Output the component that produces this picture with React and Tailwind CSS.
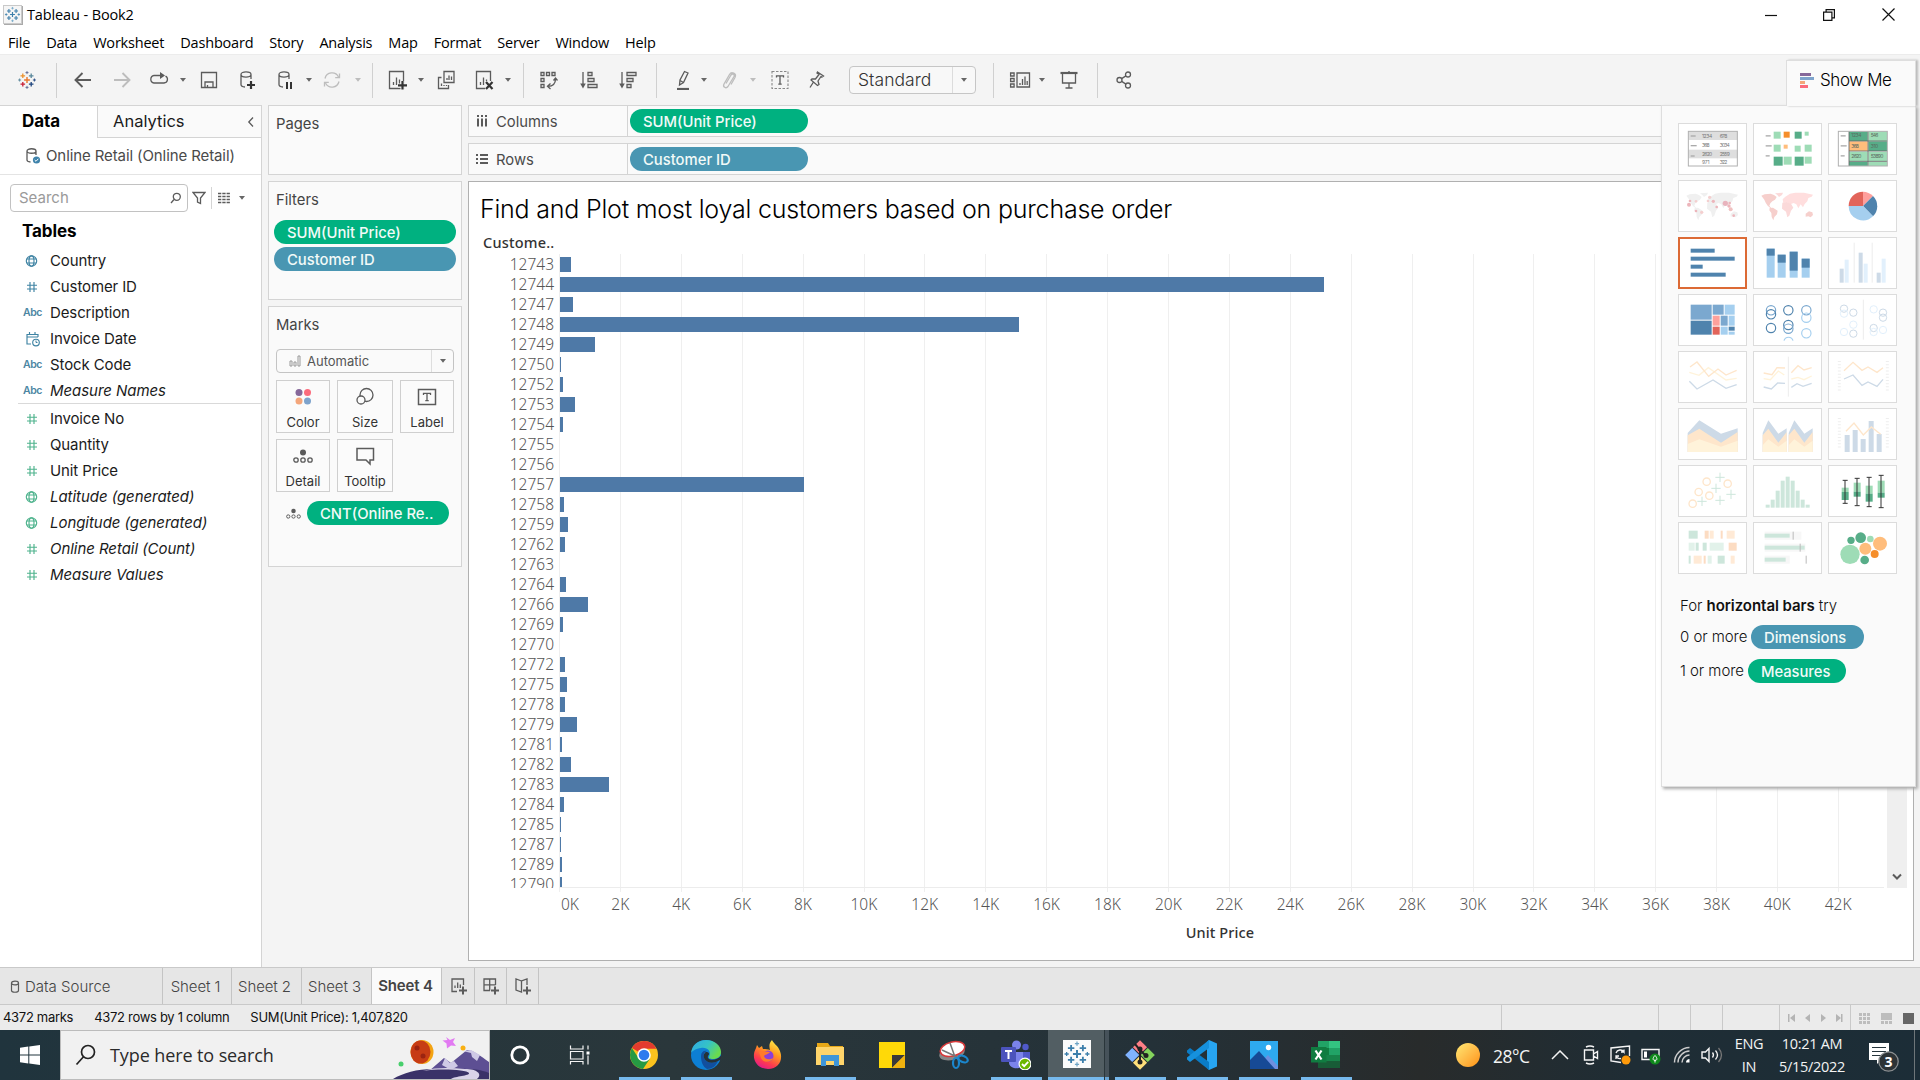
import React from "react";

const GRAY = "#5b5b5b";
const LIGHT = "#bdbdbd";

function Svg({ w = 20, h = 20, className = "", children, vb }) {
  return (
    <svg width={w} height={h} viewBox={vb || `0 0 ${w} ${h}`} fill="none" stroke={GRAY} strokeWidth="1.3" className={`block shrink-0 ${className}`}>
      {children}
    </svg>
  );
}

const Caret = ({ className = "", color = "#666" }) => (
  <Svg w={8} h={6} className={className}>
    <path d="M1 1h6L4 4.8z" fill={color} stroke="none" />
  </Svg>
);
const Sep = ({ className = "" }) => <div className={`h-[35px] w-px shrink-0 bg-[#d0d0d0] ${className}`} />;

function TableauMark({ w, className = "", mono, bg }) {
  const c = mono ? ["#3d7fab", "#3d7fab", "#3d7fab", "#3d7fab", "#3d7fab", "#6fa5c6"] : ["#e8762c", "#eb912c", "#c72037", "#1f457e", "#59879b", "#5c6692"];
  const plus = (x, y, r, col, sw = 1.3) => <path d={`M${x - r} ${y}h${2 * r}M${x} ${y - r}v${2 * r}`} stroke={col} strokeWidth={sw} />;
  return (
    <Svg w={w} h={w} vb="0 0 20 20" className={className}>
      {bg && <rect width="20" height="20" fill="#fbfbfb" stroke="none" />}
      {plus(10, 10, 2.9, c[0], 1.4)}
      {plus(5.8, 5.8, 2.3, c[1])}
      {plus(14.2, 5.8, 2.3, c[4])}
      {plus(5.8, 14.2, 2.3, c[2])}
      {plus(14.2, 14.2, 2.3, c[3])}
      {plus(10, 2.6, 1.5, c[5], 0.9)}
      {plus(10, 17.4, 1.5, c[5], 0.9)}
      {plus(2.6, 10, 1.5, c[4], 0.9)}
      {plus(17.4, 10, 1.5, c[3], 0.9)}
    </Svg>
  );
}

function TitleBar() {
  return (
    <div className="flex h-[29px] items-center bg-white pl-[3px] font-['Open_Sans',sans-serif]">
      <div className="border border-[#c9c9c9] bg-[#f5f5f5] shadow-[1px_1px_0_#aaa]">
        <TableauMark w={17} mono />
      </div>
      <span className="ml-[5px] text-[14.5px] tracking-[-0.12px] text-black">Tableau - Book2</span>
      <div className="ml-auto flex items-center pr-[25px]">
        <Svg w={12} h={12} className="mr-[46px]"><path d="M0 6.5h12" stroke="#111" strokeWidth="1.2" /></Svg>
        <Svg w={12} h={12} className="mr-[47px]"><path d="M.6 3.1h8.3v8.3H.6zM3.1 3V.6h8.3v8.3H9" stroke="#111" strokeWidth="1.2" /></Svg>
        <Svg w={13} h={13}><path d="M.5.5l12 12M12.5.5l-12 12" stroke="#111" strokeWidth="1.2" /></Svg>
      </div>
    </div>
  );
}

const MENU = ["File", "Data", "Worksheet", "Dashboard", "Story", "Analysis", "Map", "Format", "Server", "Window", "Help"];

function MenuBar() {
  return (
    <div className="flex h-[25px] items-center gap-4 bg-white pb-px pl-2 pt-[3px] font-['Open_Sans',sans-serif] text-[14.5px] tracking-[-0.2px] text-black">
      {MENU.map((m) => <span key={m}>{m}</span>)}
    </div>
  );
}

const barsBox = <path d="M2.5 1.5h14v17h-14zM6.5 15v-3M9.5 15V7.5M12.5 15V9.5" />;

function Toolbar() {
  return (
    <div className="flex h-[51px] items-center border-t border-[#ececec] bg-[#f4f4f4]">
      <TableauMark w={20} className="ml-[17px]" />
      <Sep className="ml-[19px]" />
      <Svg className="ml-4"><path d="M18 10H3M9.5 3L2.5 10l7 7" strokeWidth="1.9" /></Svg>
      <Svg className="ml-[19px]"><path d="M2 10h15M10.5 3l7 7-7 7" stroke={LIGHT} strokeWidth="1.9" /></Svg>
      <Svg className="ml-[17px]"><path d="M11 5.5H5A3.8 3.8 0 0 0 5 13h10A3.6 3.6 0 0 0 16.5 6.2" /><path d="M11 2v7l5-3.500z" fill={GRAY} stroke="none" /></Svg>
      <Caret className="ml-[10px]" />
      <Svg className="ml-[12px]"><path d="M2.5 2.5h15v15h-15zM6 17.5v-5.500h8v5.500M8.5 17.5v-2.500" /></Svg>
      <Svg className="ml-[18px]"><path d="M4 4.5c0-3.500 10-3.500 10 0s-10 3.500-10 0v10c0 1.500 1.500 2.300 4 2.500M14 4.500V9" /><path d="M14 11v8M10 15h8" stroke="#333" strokeWidth="2.2" /></Svg>
      <Svg className="ml-[18px]"><path d="M4 4.5c0-3.500 10-3.500 10 0s-10 3.500-10 0v10c0 1.500 1.500 2.300 4 2.500M14 4.500V9" /><path d="M12 12v7M16 12v7" stroke="#333" strokeWidth="2" /></Svg>
      <Caret className="ml-[10px]" />
      <Svg className="ml-[9px]"><g stroke={LIGHT}><path d="M3 8.500a7.200 7.200 0 0 1 13.500-1.500M17 11.500A7.200 7.200 0 0 1 3.500 13" /><path d="M17.500 3.500v4.200h-4.300M2.500 16.500v-4.200h4.300" /></g></Svg>
      <Caret className="ml-[12px]" color={LIGHT} />
      <Sep className="ml-[10px]" />
      <Svg className="ml-[14px]">{barsBox}<path d="M15.500 11v9M11 15.500h9" stroke="#f4f4f4" strokeWidth="4" /><path d="M15.500 11v8.500M11 15.300h9" stroke="#333" strokeWidth="2.200" /></Svg>
      <Caret className="ml-[10px]" />
      <Svg className="ml-[11px]"><path d="M8 1.500h10v11H8zM11 10V8M13 10V5.500M15.500 10V6.500M5.500 7.500H2.500v11h10v-3.500M5.500 16v-2.500M8 16v-1M10.500 16v-1" /></Svg>
      <Svg className="ml-[18px]">{barsBox}<path d="M11 11h9v9h-9z" fill="#f4f4f4" stroke="none" /><path d="M12 12l6.500 7M18.500 12L12 19" stroke="#333" strokeWidth="2.200" /></Svg>
      <Caret className="ml-[10px]" />
      <Sep className="ml-[11px]" />
      <Svg className="ml-[14px]"><path d="M3 2.500h3v3H3zM8.500 2.500h3v3h-3zM14 2.500h3v3h-3zM3 8.500h3v3H3zM3 14.500h3v3H3zM17.500 9c0 4.500-3 7.200-7.500 7.300M15.500 10.500l2-2.500 2 2.500M12.500 13.500l-3 2.800 3 2.700" /></Svg>
      <Svg className="ml-[21px]"><path d="M4 2v14M9 2.500h4v3H9zM9 8.500h6v3H9zM9 14.500h9v3H9z" /><path d="M1.200 13.500h5.600L4 18.500z" fill={GRAY} stroke="none" /></Svg>
      <Svg className="ml-[19px]"><path d="M4 2v14M9 2.500h9v3H9zM9 8.500h6v3H9zM9 14.500h4v3H9z" /><path d="M1.200 13.500h5.600L4 18.500z" fill={GRAY} stroke="none" /></Svg>
      <Sep className="ml-[18px]" />
      <Svg className="ml-4"><path d="M11.500 1.500l3.500 1.500-4.500 9.500-4 2.500.5-5zM7 10.500l3.500 2" /><path d="M4 19h12" strokeWidth="2.200" /></Svg>
      <Caret className="ml-[7px]" />
      <Svg className="ml-[11px]"><path d="M7 13.500l5-8.500c1.500-2 4-.5 3 1.500l-6 10c-2 2.500-5.500.5-4-2.500l5.500-9.500c2-3.500 7.500-1 5.500 3l-4 7" stroke={LIGHT} /></Svg>
      <Caret className="ml-[10px]" color={LIGHT} />
      <Svg className="ml-[13px]"><path d="M2 1.500h16v17H2z" strokeDasharray="2.500 1.500" strokeWidth="1.100" stroke="#888" /><path d="M6.500 7.500V5.800h7v1.700M10 5.800v8.400M8.300 14.200h3.400" /></Svg>
      <Svg className="ml-[17px]"><path d="M10.500 2l6 4-1.500 1-1-.5-3 4.500 1 3.500-1.500 1L4 10l1-1.200 3.500.2L12 4.500 10 3zM6.500 12L3 17.500" /></Svg>
      <div className="ml-[22px] flex h-[28px] w-[127px] items-center rounded-sm border border-[#c6c6c6] bg-[#f8f8f8] pl-2">
        <span className="grow text-[17.5px] font-light tracking-[0.05px] text-[#333]">Standard</span>
        <div className="flex h-full w-[23px] items-center justify-center border-l border-[#dcdcdc]"><Caret /></div>
      </div>
      <Sep className="ml-[17px]" />
      <Svg w={22} className="ml-[15px]"><path d="M1.600 3h3.500v3H1.600zM1.600 8.500h3.500v3H1.600zM1.600 14h3.500v3H1.600zM8 3h12.500v14H8zM11 15v-2M13.500 15V9M16 15V6.500M18.200 15v-4" /></Svg>
      <Caret className="ml-[7px]" />
      <Svg className="ml-[13px]"><path d="M1.500 3h17" strokeWidth="2.200" /><path d="M3.500 4v9h13V4M10 1v2M10 13v5M6.500 18h7" /></Svg>
      <Sep className="ml-[18px]" />
      <Svg className="ml-4"><circle cx="5.500" cy="10" r="2.500" /><circle cx="14" cy="4.500" r="2.500" /><circle cx="14" cy="15.500" r="2.500" /><path d="M7.700 8.600l4.200-2.700M7.700 11.400l4.200 2.700" /></Svg>
    </div>
  );
}

function FieldIcon({ type, color }) {
  if (type === "abc") return <span className="-ml-px w-[16px] text-center text-[10.5px] font-semibold leading-none tracking-[-0.5px] text-[#4c86a3]">Abc</span>;
  return (
    <Svg w={16} h={16}>
      <g stroke={color} strokeWidth="1.15">
        {type === "globe" && <><circle cx="7.5" cy="8" r="5.200" /><ellipse cx="7.5" cy="8" rx="2.500" ry="5.200" /><path d="M3 6h9M3 10h9" /></>}
        {type === "num" && <path d="M6 3v10M10 3v10M3 6.200h10M3 10h10" />}
        {type === "date" && <><path d="M14 6V3.500H3v9.500h4M3 6h11M5.500 1v3M11 1v3" /><circle cx="12" cy="11.500" r="3.300" /><path d="M12 9.500v2h1.500" strokeWidth="1" /></>}
      </g>
    </Svg>
  );
}

const DIMS = [["globe", "Country"], ["num", "Customer ID"], ["abc", "Description"], ["date", "Invoice Date"], ["abc", "Stock Code"], ["abc", "Measure Names", 1]];
const MEAS = [["num", "Invoice No"], ["num", "Quantity"], ["num", "Unit Price"], ["globe", "Latitude (generated)", 1], ["globe", "Longitude (generated)", 1], ["num", "Online Retail (Count)", 1], ["num", "Measure Values", 1]];

function Field({ f, color }) {
  return (
    <div className="flex h-[26px] items-center">
      <div className="flex w-[26px] items-center justify-start"><FieldIcon type={f[0]} color={color} /></div>
      <span className={f[2] ? "text-[15px] italic tracking-[-0.05px]" : "text-[15px] tracking-[-0.12px]"}>{f[1]}</span>
    </div>
  );
}

function DataPane() {
  return (
    <div className="flex h-[862px] w-[262px] shrink-0 flex-col border-r border-t border-[#d4d4d4] bg-white text-[#1b1b1b]">
      <div className="flex h-8">
        <div className="w-[97px] pl-[22px] pt-[3px] text-[17px] font-bold tracking-[-0.1px] text-black">Data</div>
        <div className="flex grow items-center border-b border-l border-[#d4d4d4] bg-[#fafafa] pl-[15px]">
          <span className="text-[16.5px]">Analytics</span>
          <Svg w={8} h={12} className="ml-auto mr-1.5"><path d="M6 1.500L1.800 6 6 10.500" /></Svg>
        </div>
      </div>
      <div className="flex h-[37px] items-center border-b border-[#e4e4e4] pl-[25px]">
        <Svg w={17} h={18}><path d="M2 4c0-3 9-3 9 0s-9 3-9 0v9c0 1 1 1.800 3.500 2M11 4v4" /><circle cx="11.500" cy="13" r="3.600" fill="#3f83ab" stroke="none" /><path d="M9.700 13l1.300 1.300 2.300-2.500" stroke="#fff" strokeWidth="1" /></Svg>
        <span className="ml-[4px] text-[15px] tracking-[-0.1px] text-[#4a4a4a]">Online Retail (Online Retail)</span>
      </div>
      <div className="mt-[9px] flex h-[28px] items-center pl-[10px]">
        <div className="flex h-[28px] w-[178px] items-center rounded-sm border border-[#c2c2c2] pl-[8px]">
          <span className="grow text-[15px] text-[#9a9a9a]">Search</span>
          <Svg w={12} h={12} className="mr-[5px]"><circle cx="6.800" cy="4.800" r="3.500" /><path d="M4 7.500L1 11" /></Svg>
        </div>
        <Svg w={14} h={14} className="ml-[4px]"><path d="M1 1.500h12L8.500 7v5.500l-3-1.500V7z" /></Svg>
        <div className="ml-[5px] h-[22px] w-px bg-[#d4d4d4]" />
        <Svg w={14} h={12} className="ml-[5px]"><path d="M1 1.500h12M1 4.500h12M1 7.500h12M1 10.500h12" strokeDasharray="3.300 1" strokeWidth="1.500" /></Svg>
        <Caret className="ml-[7px]" />
      </div>
      <div className="flex h-[36px] items-center pl-[22px] pt-[3px] text-[17px] font-bold tracking-[-0.1px] text-black">Tables</div>
      <div className="pl-[24px]">
        {DIMS.map((f) => <Field key={f[1]} f={f} color="#3f83a3" />)}
      </div>
      <div className="-mt-px ml-[18px] h-px shrink-0 bg-[#d9d9d9]" />
      <div className="pl-[24px] pt-[2px]">
        {MEAS.map((f) => <Field key={f[1]} f={f} color="#4fb38d" />)}
      </div>
    </div>
  );
}

const Pill = ({ blue, className = "", children }) => (
  <div className={`flex h-6 items-center rounded-full pl-[13px] pt-[2px] text-[14.8px] font-medium text-[#f2faf8] ${blue ? "bg-[#4996b2]" : "bg-[#00b180]"} ${className}`}>{children}</div>
);

const Detail = ({ w = 20 }) => (
  <Svg w={w} h={w} vb="0 0 20 20"><circle cx="10" cy="6.500" r="3" fill={GRAY} stroke="none" /><circle cx="3" cy="14" r="2.200" /><circle cx="10" cy="14" r="2.200" /><circle cx="17" cy="14" r="2.200" /></Svg>
);

function MarkButton({ label, className, children }) {
  return (
    <div className={`flex h-[53px] flex-col items-center border border-[#cfcfcf] bg-[#fbfbfb] pt-[6px] ${className}`}>
      {children}
      <span className="mt-[5px] text-[13px] leading-5 text-[#333]">{label}</span>
    </div>
  );
}

function Cards() {
  const card = "border border-[#d4d4d4] bg-[#fafafa]";
  const head = "pl-[7px] text-[14.8px] text-[#444]";
  return (
    <div className="ml-1.5 flex w-[194px] shrink-0 flex-col">
      <div className={`h-[70px] ${card}`}><div className={`pt-[7px] ${head}`}>Pages</div></div>
      <div className={`mt-[6px] h-[119px] ${card}`}>
        <div className={`h-[38px] pt-[7px] ${head}`}>Filters</div>
        <div className="flex flex-col gap-[3px] px-[5px]">
          <Pill className="w-[182px]">SUM(Unit Price)</Pill>
          <Pill blue className="w-[182px]">Customer ID</Pill>
        </div>
      </div>
      <div className={`mt-[6px] h-[261px] ${card}`}>
        <div className={`h-[42px] pt-[7px] ${head}`}>Marks</div>
        <div className="mx-[7px] flex h-[24px] items-center rounded-sm border border-[#c4c4c4]">
          <Svg w={12} h={12} className="ml-3 opacity-60"><path d="M1 6h2v5H1zM5 7h2v4H5zM9 1h2v10H9z" strokeWidth="1" /></Svg>
          <span className="ml-[6px] grow pt-px text-[13px] text-[#555]">Automatic</span>
          <div className="flex h-full w-[22px] items-center justify-center border-l border-[#dedede]"><Caret /></div>
        </div>
        <div className="mx-[7px] mt-[7px] flex gap-x-[7px]">
          <MarkButton label="Color" className="w-[54px]">
            <Svg w={20} h={20}><g stroke="none"><circle cx="6" cy="5.500" r="3.500" fill="#86689a" /><circle cx="14.500" cy="5.500" r="3.500" fill="#fb6b7c" /><circle cx="6" cy="14" r="3.500" fill="#f4a67b" /><circle cx="14.500" cy="14" r="3.500" fill="#7ea3cc" /></g></Svg>
          </MarkButton>
          <MarkButton label="Size" className="w-[56px]">
            <Svg><circle cx="11.500" cy="8" r="6.500" /><circle cx="6" cy="13" r="4" fill="#fbfbfb" /></Svg>
          </MarkButton>
          <MarkButton label="Label" className="w-[54px]">
            <Svg><path d="M1.500 2.500h17v15h-17z" strokeWidth="1.500" /><path d="M6.500 8V6.300h7V8M10 6.300v7.400M8.300 13.700h3.400" /></Svg>
          </MarkButton>
        </div>
        <div className="mx-[7px] mt-[6px] flex gap-x-[7px]">
          <MarkButton label="Detail" className="w-[54px]"><Detail /></MarkButton>
          <MarkButton label="Tooltip" className="w-[56px]">
            <Svg><path d="M2 2.500h16.500v11.500h-3.500v4l-4-4H2z" strokeWidth="1.500" /></Svg>
          </MarkButton>
        </div>
        <div className="ml-[17px] mt-[9px] flex items-center">
          <Detail w={15} />
          <Pill className="ml-[6px] w-[142px]">CNT(Online Re..</Pill>
        </div>
      </div>
    </div>
  );
}

function Shelf({ label, icon, children }) {
  return (
    <div className="flex h-8 items-center border border-[#d4d4d4] bg-[#fafafa]">
      <div className="flex h-full w-[159px] items-center border-r border-[#d4d4d4] pl-[7px]">
        {icon}
        <span className="ml-[8px] pt-[2px] text-[14.8px] text-[#4a4a4a]">{label}</span>
      </div>
      {children}
    </div>
  );
}

const ROWS = [
  [12743, 11], [12744, 764], [12747, 13], [12748, 459], [12749, 35], [12750, 1], [12752, 3], [12753, 15], [12754, 3], [12755, 0], [12756, 0],
  [12757, 244], [12758, 4], [12759, 8], [12762, 5], [12763, 0], [12764, 6], [12766, 28], [12769, 3], [12770, 0], [12772, 5], [12775, 7],
  [12778, 5], [12779, 17], [12781, 2], [12782, 11], [12783, 49], [12784, 4], [12785, 1], [12787, 1], [12789, 2], [12790, 2],
];
const TICKS = Array.from({ length: 22 }, (_, i) => i * 2);

function View() {
  return (
    <div className="mt-[6px] flex h-[780px] flex-col border border-[#b0b0b0] bg-white">
      <div className="h-[51px] pl-[11px] pt-[7px] text-[25px] font-light leading-10 tracking-[-0.21px] text-black">Find and Plot most loyal customers based on purchase order</div>
      <div className="h-[21px] pl-[14px] font-['Noto_Sans',sans-serif] text-[14.5px] font-medium leading-[19px] tracking-[0.2px] text-[#333]">Custome..</div>
      <div className="flex h-[634px] font-['Noto_Sans',sans-serif]">
        <div className="h-[634px] w-[86px] overflow-hidden pr-px text-right text-[15.5px] font-light text-[#555]">
          {ROWS.map((r) => <div key={r[0]} className="h-5 leading-[21px]">{r[0]}</div>)}
        </div>
        <div className="ml-[4px] grid w-[1325px] grid-cols-1 grid-rows-1">
          <svg width="1325" height="638" viewBox="0 0 1325 638" className="col-start-1 row-start-1 block overflow-visible">
            {TICKS.map((t, i) => <rect key={t} x={Math.round(i * 60.9)} y="0" width="1" height="638" fill="#efefef" />)}
            <rect x="0" y="633" width="1325" height="1" fill="#ececec" />
            {ROWS.map((r, i) => <rect key={r[0]} x="1" y={3 + i * 20} width={r[1]} height={i === 31 ? 10 : 15} fill="#4e79a7" />)}
          </svg>
        </div>
        <div className="ml-[3px] flex w-5 flex-col items-center justify-end bg-[#efefef] pb-[7px]">
          <Svg w={10} h={8}><path d="M1 1.500L5 5.500 9 1.500" strokeWidth="2" /></Svg>
        </div>
      </div>
      <div className="flex h-[34px] pl-[60px] font-['Noto_Sans',sans-serif] text-[15.5px] font-light leading-[33px] text-[#555]">
        {TICKS.map((t, i) => <div key={t} className={i === 0 ? "w-[60.9px] shrink-0 pl-[21px] text-center" : "w-[60.9px] shrink-0 text-center"}>{t}K</div>)}
      </div>
      <div className="pl-[66px] text-center font-['Noto_Sans',sans-serif] text-[14.5px] font-medium leading-5 tracking-[0.1px] text-[#333]"><span className="pr-2">Unit Price</span></div>
    </div>
  );
}

/* Thumbnails of the chart types, drawn on a 207 x 156 grid. */
const LAND = {
  am: "M25 47l10-4 18-2 10 4 8 6-5 8-8 5-6 6-3 7 5 6 6 4-8-3-8-7-6-9-4-9zM50 84l10-1 14 9-2 11-8 8-3 10-5-10-1-12-6-8z",
  gl: "M66 40l24-2-3 7-9 6-5-6z",
  eu: "M89 58l8-8 14-9 16-3 26 0 27 6-4 6-10 4-3 10-8 8-5 10-7-9-7 12-6-12-8-4-10 4-9-6-12 2z",
  af: "M88 68l14-2 12 5 7 12-7 9-5 15-6 5-4-17-12-9z",
  au: "M158 101l10-7 10 3 2 8-7 7-7-3-8 1z",
};

const line = (pts, c, w = 4) => <polyline points={pts} stroke={c} strokeWidth={w} />;
const rects = (arr) => arr.map(([x, y, w, h, f], i) => <rect key={i} x={x} y={y} width={w} height={h} fill={f} stroke="none" />);
const dots = (arr) => arr.map(([x, y, r, f], i) => <circle key={i} cx={x} cy={y} r={r} fill={f} stroke="none" />);
const rings = (arr, r, sw) => arr.map(([x, y, c], i) => <circle key={i} cx={x} cy={y} r={r} stroke={c} strokeWidth={sw} />);
const cells = (arr, fill = "#777") => arr.map(([x, y, t], i) => <text key={i} x={x} y={y} fontSize="15" fill={fill} stroke="none" textLength={t.length * 7.6}>{t}</text>);
const G1 = "#9edcb6", G2 = "#57ad88", O1 = "#ffbd7c", O2 = "#f58e2b", B0 = "#4f83ad", B1 = "#7ba8cf", B2 = "#a5cfef";
const PB = "#cddae7", PL = "#e2f0fc", PO = "#fee6cb", PY = "#fff3da", PG = "#cde6db";

const THUMBS = [
  <>{rects([[31, 25, 147, 26, "#dedede"], [31, 80, 147, 26, "#dedede"], [38, 37, 15, 4, "#aaa"], [38, 66, 18, 4, "#aaa"], [38, 97, 12, 4, "#aaa"]])}<rect x="31" y="25" width="147" height="104" stroke="#b0b0b0" strokeWidth="3" />{cells([[72, 45, "1234"], [125, 45, "678"], [72, 72, "368"], [125, 72, "3034"], [72, 99, "2620"], [125, 99, "2559"], [72, 123, "971"], [125, 123, "322"]])}</>,
  <>{rects([[38, 36, 15, 5, "#bbb"], [38, 66, 18, 5, "#bbb"], [38, 96, 12, 5, "#bbb"], [62, 26, 21, 21, G1], [92, 26, 18, 18, O2], [125, 26, 21, 21, G2], [155, 26, 12, 12, G1], [62, 65, 21, 21, G1], [92, 65, 12, 12, O1], [125, 68, 18, 18, G1], [155, 65, 21, 21, G1], [62, 101, 27, 27, G2], [92, 101, 24, 24, G1], [125, 101, 27, 27, G2], [155, 101, 21, 21, G1]])}</>,
  <>{rects([[63, 25, 56, 29, G2], [121, 25, 56, 29, G1], [63, 55, 56, 29, O1], [121, 55, 56, 29, G2], [63, 86, 56, 28, G1], [121, 86, 56, 28, G1], [63, 116, 56, 13, G2], [121, 116, 56, 13, G1], [38, 36, 15, 5, "#bbb"], [38, 66, 18, 5, "#bbb"], [38, 96, 12, 5, "#bbb"]])}<path d="M63 25v104M120 25v104M63 54h115M63 84h115M63 115h115" stroke="#666" strokeWidth="2.5" /><rect x="31" y="25" width="147" height="104" stroke="#b0b0b0" strokeWidth="3" />{cells([[70, 43, "1234"], [128, 43, "546"], [70, 75, "368"], [128, 75, "310"], [70, 105, "2620"], [128, 105, "53890"]], "#5a6a60")}</>,
  <><g stroke="none" fill="#f0f0f0">{Object.values(LAND).map((d) => <path key={d} d={d} />)}</g>{dots([[33, 74, 6, "#edb5bb"], [36, 63, 4, "#edb5bb"], [54, 64, 4, "#f4cfcf"], [95, 52, 5, "#f4cfcf"], [106, 64, 5, "#edb5bb"], [90, 63, 4, "#f4cfcf"], [116, 81, 4, "#edb5bb"], [142, 70, 8, "#e8b3bd"], [155, 69, 4, "#edb5bb"], [153, 78, 5, "#edb5bb"], [158, 88, 6, "#f0c0c0"], [54, 93, 4, "#edb5bb"], [71, 97, 5, "#f4cfcf"], [167, 107, 4, "#edb5bb"]])}</>,
  <g stroke="none"><path d={LAND.am} fill="#f6cfcc" /><path d={LAND.gl} fill="#fbd9d9" /><path d={LAND.eu} fill="#ffdede" /><path d={LAND.af} fill="#fbd9d9" /><path d={LAND.au} fill="#f6cfcc" /></g>,
  <g stroke="none"><path d="M105 78V35a43 43 0 0 1 30 13z" fill="#ff9f9c" /><path d="M105 78l30-30a43 43 0 0 1 0 61z" fill={B0} /><path d="M105 78l30 31a43 43 0 0 1-73-31z" fill={B2} /><path d="M105 78H62a43 43 0 0 1 43-43z" fill="#e2645a" /></g>,
  rects([[38, 35, 72, 12, B0], [38, 59, 132, 12, B0], [38, 83, 36, 12, B0], [38, 107, 105, 12, B0]]),
  rects([[41, 35, 24, 87, B2], [74, 53, 24, 69, B2], [110, 44, 24, 78, B2], [146, 65, 24, 57, B2], [41, 35, 24, 21, B0], [74, 53, 24, 24, B0], [110, 44, 24, 57, B0], [146, 65, 24, 27, B0]]),
  rects([[35, 95, 12, 42, PB], [50, 68, 12, 69, PL], [77, 17, 3, 120, "#ececec"], [92, 47, 12, 90, PB], [107, 80, 12, 57, PL], [131, 17, 3, 120, "#ececec"], [146, 107, 12, 30, PB], [161, 65, 12, 72, PL]]),
  rects([[38, 32, 63, 45, B1], [38, 80, 63, 42, B0], [104, 32, 33, 30, B1], [140, 32, 30, 30, B2], [104, 65, 21, 30, "#ffa19c"], [128, 65, 21, 30, B1], [152, 65, 18, 30, B2], [104, 98, 21, 24, "#e2645a"], [128, 98, 21, 24, B2], [152, 98, 18, 12, B0], [152, 113, 18, 9, B2]]),
  <>{rings([[54, 49, B1], [54, 61, B0], [54, 102, B0], [106, 49, B0], [106, 93, B0], [106, 104, B1], [160, 49, B1], [160, 71, B2], [160, 118, B2]], 14, 3.5)}<path d="M93 140a14 14 0 0 1 27 0" stroke={B2} strokeWidth="3.5" /></>,
  <>{rings([[48, 44, PB], [48, 59, PL], [76, 56, PB], [76, 92, PL], [48, 114, PL], [76, 119, PB], [137, 46, PL], [165, 56, PB], [165, 71, PB], [137, 102, PB], [137, 114, PL], [165, 108, PL]], 11, 3)}<path d="M106 17v120" stroke="#ececec" strokeWidth="3" /></>,
  <>{line("34,64 63,73 91,50 144,87 176,82", PY)}{line("36,48 57,33 92,76 120,54 144,72 176,58", PO)}{line("34,91 57,114 105,87 144,112 176,101", PB)}</>,
  <>{line("32,66 57,71 72,50 96,51", PO)}{line("32,83 52,86 76,60 94,72", PY)}{line("32,108 55,114 74,96 96,97", PB)}{line("115,65 135,44 153,57 176,50", PO)}{line("115,84 135,79 153,86 176,75", PY)}{line("115,109 132,98 150,106 176,97", PB)}<path d="M106 17v120" stroke="#ececec" strokeWidth="3" /></>,
  <>{line("48,59 75,34 102,58 120,48 147,64 165,50", PO)}{line("48,84 75,72 102,103 120,93 147,106 165,85", PB)}<path d="M34 30v94M178 30v94" stroke="#eee" strokeWidth="9" strokeDasharray="3 6.5" /></>,
  <g stroke="none"><path d="M29 75l35-38 65 40 50-16v71H29z" fill={PB} /><path d="M29 82l35-20 65 42 50-32v60H29z" fill={PO} /><path d="M29 108l35-14 65 22 50-18v34H29z" fill={PY} /></g>,
  <g stroke="none"><path d="M29 75l17-38 30 40 25-16v71H29zM107 75l17-38 30 40 25-16v71h-72z" fill={PB} /><path d="M29 82l17-20 30 42 25-32v60H29zM107 82l17-20 30 42 25-32v60h-72z" fill={PO} /><path d="M29 112l17-18 30 22 25-18v34H29zM107 112l17-18 30 22 25-18v34h-72z" fill={PY} /></g>,
  <>{rects([[50, 81, 15, 51, PB], [74, 66, 15, 66, PB], [98, 93, 15, 39, PB], [122, 39, 15, 93, PB], [146, 78, 15, 54, PB]])}{line("54,70 78,45 106,81 130,57 158,79", PO)}<path d="M34 30v94M178 30v94" stroke="#eee" strokeWidth="9" strokeDasharray="3 6.5" /></>,
  <>{rings([[44, 116, PO], [62, 81, PO], [86, 50, PO], [94, 92, PO], [149, 56, PO]], 11, 4)}<path d="M58 109h28M72 95v28M100 70h28M114 56v28M112 37h28M126 23v28M112 106h28M126 92v28M145 88h28M159 74v28" stroke={PG} strokeWidth="3" /></>,
  rects([[38, 119, 12, 9, PG], [53, 104, 12, 24, PG], [68, 77, 12, 51, PG], [83, 47, 12, 81, PG], [98, 35, 12, 93, PG], [113, 47, 12, 81, PG], [128, 77, 12, 51, PG], [143, 104, 12, 24, PG], [158, 119, 12, 9, PG]]),
  <>{rects([[41, 68, 21, 13, G1], [41, 81, 21, 24, G2], [77, 53, 21, 27, G1], [77, 80, 21, 15, G2], [113, 62, 21, 24, G1], [113, 86, 21, 24, G2], [149, 47, 21, 36, G1], [149, 83, 21, 15, G2]])}<path d="M51 46v69M44 46h15M44 115h15M87 40v82M80 40h15M80 122h15M123 37v88M116 37h15M116 125h15M159 31v97M152 31h15M152 128h15" stroke="#333" strokeWidth="3" /></>,
  rects([[32, 26, 27, 24, PG], [80, 26, 12, 24, "#fcdcc2"], [95, 26, 12, 24, "#ffead6"], [128, 26, 6, 24, "#fcdcc2"], [146, 26, 24, 24, "#ffead6"], [32, 62, 18, 24, "#e2f2ea"], [53, 62, 9, 24, PG], [74, 62, 12, 24, PG], [95, 62, 42, 24, "#e2f2ea"], [152, 62, 24, 24, "#fcdcc2"], [32, 101, 6, 24, PG], [47, 101, 24, 24, "#ffead6"], [77, 101, 6, 24, "#fcdcc2"], [89, 101, 12, 24, "#e2f2ea"], [119, 101, 21, 24, PG], [158, 101, 12, 24, "#ffead6"]]),
  rects([[35, 29, 110, 24, "#f7f7f7"], [35, 65, 122, 24, "#f7f7f7"], [35, 101, 75, 24, "#f7f7f7"], [35, 35, 75, 12, PG], [35, 71, 120, 12, PG], [35, 107, 63, 12, PG], [119, 29, 3, 24, "#bbb"], [140, 65, 3, 24, "#bbb"], [158, 101, 3, 24, "#bbb"]]),
  dots([[66, 97, 29, G1], [69, 55, 11, G2], [98, 47, 16, G2], [127, 51, 10, G1], [112, 80, 18, O1], [156, 65, 21, O1], [140, 96, 12, O2], [110, 114, 13, G2]]),
];

function ShowMe() {
  return (
    <div className="absolute left-[1661px] top-[60px] flex w-[255px] flex-col">
      <div className="z-10 ml-[125px] flex h-[46px] w-[130px] items-center border border-b-0 border-[#dedede] bg-[#fafafa] pb-[6px] pl-[12px] shadow-[2px_0_2px_#bbb]">
        <Svg w={16} h={16}>{rects([[1, 0, 11, 3, "#86689a"], [1, 4, 14, 3, "#7ea3cc"], [1, 8, 5, 3, "#f4a67b"], [1, 12, 8, 3, "#fb6b7c"]])}</Svg>
        <span className="ml-[5px] pt-px text-[17px] font-light tracking-[-0.4px] text-black">Show Me</span>
      </div>
      <div className="-mt-px h-[682px] border border-[#dedede] bg-[#fafafa] px-4 pt-[17px] shadow-[2px_2px_3px_#aaa]">
        <div className="grid grid-cols-[69px_69px_69px] gap-x-[6px] gap-y-[5px]">
          {THUMBS.map((t, i) => (
            <div key={i} className={`h-[52px] w-[69px] bg-white outline ${i === 6 ? "outline-2 outline-[#dc6a35] -outline-offset-2" : "outline-1 -outline-offset-1 outline-[#dcdcdc]"}`}>
              <Svg w={69} h={52} vb="0 0 207 156">{t}</Svg>
            </div>
          ))}
        </div>
        <div className="ml-[2px] mt-[20px] text-[15px] leading-6 tracking-[-0.05px] text-[#111]"><span className="font-light">For </span><b className="font-semibold">horizontal bars</b><span className="font-light"> try</span></div>
        <div className="ml-[2px] mt-[7px] flex items-center text-[15px] tracking-[-0.05px] text-[#111]"><span className="w-[71px] font-light">0 or more</span><Pill blue className="w-[113px]">Dimensions</Pill></div>
        <div className="ml-[2px] mt-[10px] flex items-center text-[15px] tracking-[-0.05px] text-[#111]"><span className="w-[68px] font-light">1 or more</span><Pill className="w-[98px]">Measures</Pill></div>
      </div>
    </div>
  );
}

function SheetTabs() {
  const tab = "flex h-full items-center border-r border-[#c4c4c4]";
  return (
    <div className="flex h-[37px] items-center border-t border-[#c9c9c9] bg-[#e6e6e6] text-[15px] font-light text-[#444]">
      <div className={`${tab} w-[163px] pl-[10px] pt-[2px]`}>
        <Svg w={10} h={14} className="mr-[5px]"><path d="M1.5 3c0-2.500 7-2.500 7 0s-7 2.500-7 0v7.500c0 2.300 7 2.300 7 0V3" strokeWidth="1.2" /></Svg>
        Data Source
      </div>
      <div className={`${tab} w-[69px] justify-center pr-[3px] pt-[2px] tracking-[-0.1px]`}>Sheet 1</div>
      <div className={`${tab} w-[70px] justify-center pr-[4px] pt-[2px] tracking-[-0.1px]`}>Sheet 2</div>
      <div className={`${tab} w-[70px] justify-center pr-[4px] pt-[2px] tracking-[-0.1px]`}>Sheet 3</div>
      <div className={`${tab} w-[70px] justify-center bg-[#fafafa] pr-[2px] text-[15px] font-semibold tracking-[-0.15px]`}>Sheet 4</div>
      <div className={`${tab} w-[33px] justify-center pl-[2px]`}><Svg w={18} h={18}><path d="M7 14.500H2V2h11.500v6M5 11V8.500M7.700 11V5.500M10.300 11V7.500" /><path d="M13 9.500v8M9 13.500h8" strokeWidth="2" /></Svg></div>
      <div className={`${tab} w-[32px] justify-center`}><Svg w={18} h={18}><path d="M8 13.500H2V2h11.500v6M2 7.800h11.500M7.700 2v11.500" /><path d="M13 9.500v8M9 13.500h8" strokeWidth="2" /></Svg></div>
      <div className={`${tab} w-[32px] justify-center`}><Svg w={18} h={18}><path d="M7.500 4L2 2v11l5.500 2V4l5.500-2v6" /><path d="M13 9.500v8M9 13.500h8" strokeWidth="2" /></Svg></div>
    </div>
  );
}

function StatusBar() {
  const cell = "h-full shrink-0 border-l border-[#c9c9c9]";
  return (
    <div className="flex h-[26px] items-center border-t border-[#c9c9c9] bg-[#ebebeb] pl-[3px] text-[13px] tracking-[-0.3px] text-[#111]">
      <span>4372 marks</span>
      <span className="ml-[21px]">4372 rows by 1 column</span>
      <span className="ml-[21px]">SUM(Unit Price): 1,407,820</span>
      <div className="ml-auto flex h-full">
        <div className={`${cell} w-[157px]`} />
        <div className={`${cell} w-[32px]`} />
        <div className={`${cell} w-[32px]`} />
        <div className={`${cell} w-[57px]`} />
        <div className={`${cell} flex w-[71px] items-center justify-center`}>
          <Svg w={60} h={10}><g stroke="none" fill="#b4b4b4"><path d="M3 1h1.500v8H3zM10 1v8L5 5zM25 1v8l-5-4zM36 1v8l5-4zM51 1v8l5-4zM56 1h1.500v8H56z" /></g></Svg>
        </div>
        <div className={`${cell} flex w-[70px] items-center justify-center`}>
          <Svg w={56} h={12}>{rects([[1, 1, 3, 3, LIGHT], [5, 1, 3, 3, LIGHT], [9, 1, 3, 3, LIGHT], [1, 5, 3, 3, LIGHT], [5, 5, 3, 3, LIGHT], [9, 5, 3, 3, LIGHT], [1, 9, 3, 3, LIGHT], [5, 9, 3, 3, LIGHT], [9, 9, 3, 3, LIGHT], [23, 1, 11, 7, LIGHT], [23, 9, 3, 3, LIGHT], [27, 9, 3, 3, LIGHT], [31, 9, 3, 3, LIGHT], [45, 1, 11, 11, "#666"]])}</Svg>
        </div>
      </div>
    </div>
  );
}

const BrandIcons = {
  chrome: <><circle cx="15" cy="15" r="14" fill="#fcc31e" /><path d="M15 15L2.900 8A14 14 0 0 1 27.500 8.700H15z" fill="#e33b2e" /><path d="M2.900 8A14 14 0 0 0 14 29l7-10.500-6-3.500-5.500 3z" fill="#269a43" /><circle cx="15" cy="15" r="6.800" fill="#fff" /><circle cx="15" cy="15" r="5.300" fill="#2f7bee" /></>,
  edge: <><defs><linearGradient id="eg1" x1="0" y1="0" x2="1" y2=".5"><stop offset="0" stopColor="#2fa8e8" /><stop offset=".55" stopColor="#35c3c6" /><stop offset="1" stopColor="#6adb4e" /></linearGradient></defs><circle cx="15" cy="15" r="15" fill="#0d7fd4" /><path d="M0 13C1 5 7 0 15 0c9 0 15 6 15 12 0 5-4 7-8 7-3 0-5-1-4-2 3-6-2-10-8-9-5 .5-9 3-10 5z" fill="url(#eg1)" /><path d="M10 16c0-4 3-6 6-5-3 1-4 4-3 7 2 5 9 6 14 3-2 5-6 8-11 8-4-2-6-7-6-13z" fill="#124f9e" /><path d="M13.500 13.500c1.500-2.500 5-1.500 4.500 1-2 2-1.500 4 1 5 3 1 8 0 11-4v4l-3 1.500c-5 3-12 2-14-3-.5-2-.5-3 .5-4.500z" fill="#263238" /></>,
  firefox: <><defs><linearGradient id="fx" x1=".8" y1="0" x2=".3" y2="1"><stop offset="0" stopColor="#fff04a" /><stop offset=".4" stopColor="#ff9a1f" /><stop offset=".75" stopColor="#ff3b4e" /><stop offset="1" stopColor="#e01b8c" /></linearGradient></defs><path d="M19 0c1 3 5 5 7 9 5 9 1 20-11 20C6 29 0 22 1 14c0-3 2-5 3-9l2 3 3-2 1 3c3 0 5 0 7 1-1-4-1-7 2-10z" fill="url(#fx)" /><circle cx="15" cy="16" r="5.500" fill="#8b3fd8" /><path d="M6 12c4-2 7 0 11 0-2 3-5 2-6 4 1 4 6 4 9 2-2 5-10 5-12 0z" fill="#ff7a2b" /></>,
  folder: <><path d="M2 3h11l2 3h13v18H2z" fill="#e8a817" /><path d="M1 7h28v18H1z" fill="#ffd56b" /><path d="M6 26V15h18v11h-5v-5h-8v5z" fill="#3f96d8" /></>,
  sticky: <><path d="M2 2h26v26H2z" fill="#ffd908" /><path d="M15 15h13L15 28z" fill="#3a3a3a" /><path d="M28 15v13H15z" fill="#f0b20f" /></>,
  snip: <><ellipse cx="13" cy="13" rx="13" ry="7" transform="rotate(-14 13 13)" fill="#888" /><ellipse cx="13.500" cy="9" rx="12.500" ry="7" transform="rotate(-14 13.500 9)" fill="#fff" stroke="#d8393a" strokeWidth="1.500" /><path d="M11 3l5 14M3 10l15 7" stroke="#777" strokeWidth="1.500" /><g stroke="#1b86cc" strokeWidth="2.200" fill="none"><ellipse cx="17" cy="23" rx="3" ry="5" /><ellipse cx="24" cy="19" rx="5" ry="3" transform="rotate(25 24 19)" /></g></>,
  teams: <><circle cx="24.500" cy="7" r="3.200" fill="#5059c9" /><circle cx="15.500" cy="5" r="4.500" fill="#7b83eb" /><path d="M20 12h9v9c0 3-5 6-8 3z" fill="#5059c9" /><path d="M8 12h14v11c0 7-13 7-14 0z" fill="#7b83eb" /><rect y="7" width="15" height="15" rx="1" fill="#4b53bc" /><path d="M4 11h7M7.500 11v8" stroke="#fff" strokeWidth="2" /><circle cx="24" cy="24" r="6.500" fill="#fff" /><circle cx="24" cy="24" r="5.300" fill="#6bb700" /><path d="M21 24l2.200 2.200 4-4.400" stroke="#fff" strokeWidth="1.800" fill="none" /></>,
  git: <><g transform="rotate(45 15 15)"><path d="M4.500 4.500h10v10h-10z" fill="#ff7f86" /><path d="M15.500 4.500h10v10h-10z" fill="#84d35c" /><path d="M4.500 15.500h10v10h-10z" fill="#80b3ff" /><path d="M15.500 15.500h10v10h-10z" fill="#ffe07a" /></g><path d="M10 4l5 6v12M15 10l6 6" stroke="#222" strokeWidth="2" fill="none" /><circle cx="15" cy="9" r="2.500" fill="#222" /><circle cx="21" cy="15.500" r="2.500" fill="#222" /><circle cx="15" cy="22" r="2.500" fill="#222" /></>,
  code: <><path d="M22 0l8 3.500v23L22 30l-2-2V2z" fill="#27a5f2" /><path d="M0 10.500L3 8l19 14v8L0 12.500z" fill="#0a7cc7" /><path d="M0 19.500L3 22 22 8V0L0 17.500z" fill="#1691dd" /></>,
  photos: <><path d="M1 1h28v28H1z" fill="#2eaaf0" /><path d="M14 20l5-5 10 11v3H14z" fill="#6d8fe0" /><path d="M1 20l9-9 16 18H1z" fill="#164a96" /><circle cx="19.500" cy="7.500" r="2.700" fill="#fff" /></>,
  excel: <><path d="M7 1h22v27H7z" fill="#21a366" /><path d="M18 1h11v7H18z" fill="#33c481" /><path d="M7 8h11v7H7z" fill="#107c41" /><path d="M18 15h11v6H18zM7 15h11v13H7z" fill="#17834a" /><path d="M7 21h22v7H7z" fill="#185c37" /><path d="M0 7h15.500v15.500H0z" fill="#107c41" /><path d="M4.500 10.500l6 9M10.500 10.500l-6 9" stroke="#fff" strokeWidth="2.200" /></>,
};

function TaskApp({ name, running }) {
  return (
    <div className="flex h-full w-[62px] shrink-0 flex-col items-center">
      <svg width="30" height="30" viewBox="0 0 30 30" className="mt-2.5 block shrink-0">{BrandIcons[name]}</svg>
      {running && <div className="mt-auto h-[3px] w-[51px] bg-[#76b9ed]" />}
    </div>
  );
}

function Taskbar() {
  const W = "#f5f5f5";
  return (
    <div className="flex h-[50px] items-center bg-[linear-gradient(90deg,#20343d_0%,#2a373b_35%,#243138_60%,#282b2b_74%,#1f2d35_85%,#1c2d37_100%)] font-['Open_Sans',sans-serif] text-[#f3f3f3]">
      <div className="flex h-full w-[60px] items-center justify-center">
        <Svg w={20} h={20}><path d="M0 2.800L8.300 1.600v7.900H0zM9.300 1.500L20 0v9.500H9.300zM0 10.500h8.300v7.900L0 17.200zM9.300 10.500H20V20L9.300 18.500z" fill="#fff" stroke="none" /></Svg>
      </div>
      <div className="flex h-full w-[430px] items-center border border-[#bcbcbc] bg-[#f1f1f1] pl-[14px]">
        <Svg w={22} h={22}><circle cx="13" cy="8" r="6.500" stroke="#222" strokeWidth="1.700" /><path d="M8.500 12.800L1.500 20.500" stroke="#222" strokeWidth="1.700" /></Svg>
        <span className="ml-[13px] text-[18px] tracking-[-0.1px] text-[#2a2a2a]">Type here to search</span>
        <svg width="96" height="48" viewBox="0 0 96 48" className="ml-auto block shrink-0">
          <path d="M36 40l15-13 7 5 16-13c4-1 14 6 22 12v17H36z" fill="#5d4f93" />
          <path d="M52 27l5 5 4-2 4 5-7 4-9-5zM78 22l-8-2 8-1 9 5-3 6-5-4z" fill="#cfc9e6" />
          <path d="M0 48c10-6 24-10 40-10 20 0 44-2 56 4v6z" fill="#3a3268" />
          <path d="M30 40c18-3 44-1 46 2 1 3-14 3-18 6h26c6-5 0-10-12-10-14-1-28-2-42 2z" fill="#d9d3e8" />
          <ellipse cx="29" cy="21" rx="11.500" ry="12" fill="#f3a312" />
          <ellipse cx="27.500" cy="21" rx="10" ry="11.500" fill="#c73c14" />
          <circle cx="24" cy="17" r="2.500" fill="#9b2411" /><circle cx="30" cy="25" r="2.500" fill="#9b2411" />
          <path d="M53 6l4 3 5-2-2 4 3 4-5-.5-4 3-.5-5-4-3 5-.5z" fill="#e27af2" />
          <circle cx="70" cy="17" r="2.500" fill="#f9b013" /><circle cx="8" cy="33" r="2.500" fill="#48cf6c" />
        </svg>
      </div>
      <div className="flex h-full w-[60px] items-center justify-center"><Svg w={20} h={20}><circle cx="10" cy="10" r="8.200" stroke="#fff" strokeWidth="2.800" /></Svg></div>
      <div className="flex h-full w-[63px] items-center justify-center pr-[3px]"><Svg w={22} h={22}><path d="M1.500 1.500V5h12.500V1.500M1.500 7.500h12.500v7.500H1.500zM1.500 20.500V17.500h12.500v3M19 1.500v4M19 11.500v9" stroke={W} strokeWidth="1.200" /><path d="M17.500 7.500h3v3h-3z" fill="#fff" stroke="none" /></Svg></div>
      <TaskApp name="chrome" running />
      <TaskApp name="edge" running />
      <TaskApp name="firefox" />
      <TaskApp name="folder" running />
      <TaskApp name="sticky" />
      <TaskApp name="snip" />
      <TaskApp name="teams" running />
      <div className="flex h-full w-[62px] shrink-0 pl-px">
        <div className="flex h-full w-[56px] flex-col items-center bg-[#525e63]">
          <TableauMark w={28} mono bg className="ml-[2px] mt-[10px]" />
          <div className="mt-auto h-[3px] w-full bg-[#76b9ed]" />
        </div>
        <div className="flex h-full w-[5px] items-end border-l border-[#2a363b] bg-[#46525a]"><div className="h-[3px] w-full bg-[#68a4d4]" /></div>
      </div>
      <TaskApp name="git" running />
      <TaskApp name="code" running />
      <TaskApp name="photos" running />
      <TaskApp name="excel" running />
      <div className="ml-auto flex h-full items-center">
        <div className="h-6 w-6 rounded-full bg-linear-to-br from-[#ffe873] to-[#ff9000]" />
        <span className="ml-[13px] w-[51px] pt-[2px] text-[17.5px] tracking-[-0.5px]">28°C</span>
        <Svg w={18} h={10} className="ml-[7px]"><path d="M1 9l8-8 8 8" stroke={W} strokeWidth="1.500" /></Svg>
        <Svg w={16} h={20} className="ml-[14px]"><path d="M1.500 5h9v10h-9zM10.500 9l4-2.500v7l-4-2.500M3 2q4-2 8 0M3 18q4 2 8 0" stroke={W} strokeWidth="1.400" /></Svg>
        <Svg w={21} h={22} className="ml-[11px]"><path d="M19.500 12V2L1 4v13l10 1.500" stroke={W} strokeWidth="1.400" /><path d="M6 9a4.500 4.500 0 0 1 8-1v-2.500M14 8h-3M6 15v-3h3M6 12a4.500 4.500 0 0 0 5 2.500" stroke={W} strokeWidth="1.300" /><circle cx="16" cy="16" r="4.500" fill="#ff9a0a" stroke="none" /></Svg>
        <Svg w={20} h={20} className="ml-[10px]"><path d="M1 4.500h17v10H1z" stroke={W} strokeWidth="1.400" /><path d="M3 6.500h3v6H3z" fill="#fff" stroke="none" /><circle cx="14" cy="14" r="5.500" fill="#0f8a1c" stroke="none" /><path d="M14 17.500v-3M14 10.500c-3 3-2 5 0 5s3-2 0-5z" stroke="#fff" strokeWidth="1" /></Svg>
        <Svg w={18} h={18} className="ml-[12px]"><path d="M1.500 16.500C1.500 8.500 8.500 1.500 16.500 1.500M5 16.500C5 10.500 10.500 5 16.500 5M9 16.500c0-4 3.500-7.500 7.500-7.500" stroke="#ccc" strokeWidth="1.500" /><path d="M13 16.500c0-2 1.500-3.500 3.500-3.500v3.500z" fill="#fff" stroke="none" /></Svg>
        <Svg w={22} h={18} className="ml-[10px]"><path d="M1 6h3.500L8 2.500v13L4.500 12H1z" stroke={W} strokeWidth="1.400" /><path d="M11.500 6.500q2 2.500 0 5M14.500 4.500q4 4.500 0 9" stroke={W} strokeWidth="1.300" /><path d="M17.500 2q6 7 0 14" stroke="#777" strokeWidth="1.300" /></Svg>
        <div className="ml-[9px] w-[34px] text-center text-[14.5px] leading-[23px] tracking-[-0.3px]"><div>ENG</div><div>IN</div></div>
        <div className="ml-[8px] w-[76px] text-center text-[14.5px] leading-[23px] tracking-[-0.3px]"><div>10:21 AM</div><div>5/15/2022</div></div>
        <Svg w={32} h={34} className="ml-[18px] mt-[4px]"><path d="M1 3h20v17h-8l-4 4v-4H1z" fill="#fff" stroke="none" /><path d="M4 7.500h14M4 11.500h14M4 15.500h9" stroke="#26353c" strokeWidth="1.200" /><circle cx="20.500" cy="21.500" r="9.700" fill="#2d3336" stroke="#8b8f91" /><text x="20.500" y="26.500" textAnchor="middle" fontSize="14" fontWeight="700" fill="#fff" stroke="none">3</text></Svg>
        <div className="ml-[14px] h-full w-px bg-[#6e7679]" />
        <div className="w-[5px]" />
      </div>
    </div>
  );
}

export default function App() {
  return (
    <div className="relative flex h-[1080px] w-[1920px] flex-col overflow-hidden whitespace-nowrap bg-[#f4f4f4] font-['Inter',sans-serif]">
      <TitleBar />
      <MenuBar />
      <Toolbar />
      <div className="flex h-[862px]">
        <DataPane />
        <Cards />
        <div className="ml-[6px] flex w-[1446px] flex-col">
          <Shelf label="Columns" icon={<Svg w={12} h={14}><path d="M2 4.500v8M6 4.500v8M10 4.500v8M2 1v2M6 1v2M10 1v2" strokeWidth="2" /></Svg>}>
            <Pill className="ml-[2px] w-[178px]">SUM(Unit Price)</Pill>
          </Shelf>
          <div className="h-[6px]" />
          <Shelf label="Rows" icon={<Svg w={12} h={12}><path d="M4 2h8M4 6h8M4 10h8M0 2h2M0 6h2M0 10h2" strokeWidth="2" /></Svg>}>
            <Pill blue className="ml-[2px] w-[178px]">Customer ID</Pill>
          </Shelf>
          <View />
        </div>
      </div>
      <SheetTabs />
      <StatusBar />
      <Taskbar />
      <ShowMe />
    </div>
  );
}
